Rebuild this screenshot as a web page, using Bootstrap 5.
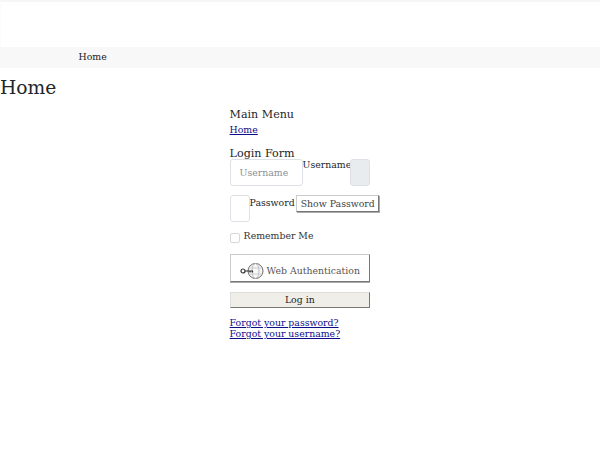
<!DOCTYPE html>
<html lang="en">
<head>
<meta charset="utf-8">
<title>Home</title>
<link rel="stylesheet" href="https://cdn.jsdelivr.net/npm/bootstrap@5.3.0/dist/css/bootstrap.min.css">
<style>
body{font-family:"DejaVu Serif",serif;font-size:9.35px;line-height:1;color:#212529;background:#fff}
a{color:#0d0d8c}
.top-band{height:47px;border-top:2px solid #f6f6f6;border-left:1px solid #fbfbfb}
.menu-band{height:21px;background:#f8f8f8;padding-left:78.6px;color:#222;line-height:20px}
.page-title{font-size:18.7px;font-weight:400;margin:8px 0 0;line-height:24px;color:#212529}
.form-col{width:140px;margin-left:229.6px}
.side-title{font-size:11.1px;line-height:15px;margin:7px 0 0;font-weight:400;color:#212529}
.menu-link{display:block;line-height:14px;margin-top:1px}
.form-title{font-size:11.1px;line-height:15px;margin:9px 0 0;font-weight:400;color:#212529}
.field-row{display:flex;align-items:flex-start;white-space:nowrap}
.user-row{height:27px;margin-top:-2px}
.pass-row{height:27px;margin-top:9px}
.box{height:27px;border:1px solid #dee2e6;border-radius:3px;background:#fff}
.user-input{width:73px;padding:0 9px;font-size:9.35px;color:#212529}
.user-input::placeholder{color:#8a8f94;opacity:1}
.user-label{line-height:12px}
.addon{width:20px;height:27px;flex:none;background:#e9ecef;border:1px solid #dee2e6;border-radius:3px;margin-left:-1px}
.pass-input{width:20px;padding:0}
.pass-label{line-height:14px;padding-top:1px}
.plain-btn{font-family:inherit;font-size:9.35px;line-height:1;background:#fff;color:#444;border:1px solid #ccc;border-right-color:#777;border-bottom-color:#777;border-radius:0;padding:2px 3.5px;height:17px;margin-left:1.5px;box-shadow:1px 1px 0 #aaa}
.remember{display:flex;align-items:center;margin-top:7px;height:14px;color:#333}
.check-box{width:10px;height:10px;border:1px solid #d5d8db;border-radius:2px;margin:3px 4px 0 0;appearance:none;background:#fff}
.auth-btn{display:flex;align-items:center;justify-content:center;gap:3px;width:140.4px;height:28px;margin-top:11px;padding:5px 0 0;font-family:inherit;font-size:9.35px;color:#555;background:#fff;border:1px solid #ccc;border-right-color:#777;border-bottom-color:#777;box-shadow:0 1px 0 #aaa}
.login-btn{display:block;width:140.4px;height:16px;margin-top:10px;padding:0;font-family:inherit;font-size:9.35px;line-height:1;color:#212529;background:#efeee9;border:1px solid #ddd;border-right-color:#777;border-bottom-color:#777}
.forgot{margin-top:9px;line-height:11px}
.forgot a{display:block}
</style>
</head>
<body>
<div class="top-band"></div>
<div class="menu-band">Home</div>
<h1 class="page-title">Home</h1>
<div class="form-col">
<h3 class="side-title">Main Menu</h3>
<a class="menu-link" href="#">Home</a>
<h3 class="form-title">Login Form</h3>
<form>
<div class="field-row user-row">
<input class="box user-input" type="text" placeholder="Username" aria-label="Username">
<label class="user-label">Username</label>
<span class="addon"></span>
</div>
<div class="field-row pass-row">
<input class="box pass-input" type="password" aria-label="Password">
<label class="pass-label">Password</label>
<button type="button" class="plain-btn">Show Password</button>
</div>
<label class="remember"><input class="check-box" type="checkbox">Remember Me</label>
<button type="button" class="auth-btn">
<svg width="24" height="18" viewBox="0 0 24 18" fill="none" stroke="#666"><circle cx="15.5" cy="9" r="7.5" fill="#f8f8f8"/><ellipse cx="15.5" cy="9" rx="3.5" ry="7.5" stroke="#bbb"/><path d="M8.7 6h13.6M8.7 12h13.6" stroke="#ccc"/><circle cx="3" cy="9" r="2" stroke="#333" stroke-width="1.2"/><path d="M5 9h8M10 9v1.5M12.5 9v1.5" stroke="#333" stroke-width="1.2"/></svg>
<span>Web Authentication</span>
</button>
<button type="button" class="login-btn">Log in</button>
<div class="forgot"><a href="#">Forgot your password?</a><a href="#">Forgot your username?</a></div>
</form>
</div>
<script src="https://cdn.jsdelivr.net/npm/bootstrap@5.3.0/dist/js/bootstrap.bundle.min.js"></script>
</body>
</html>
